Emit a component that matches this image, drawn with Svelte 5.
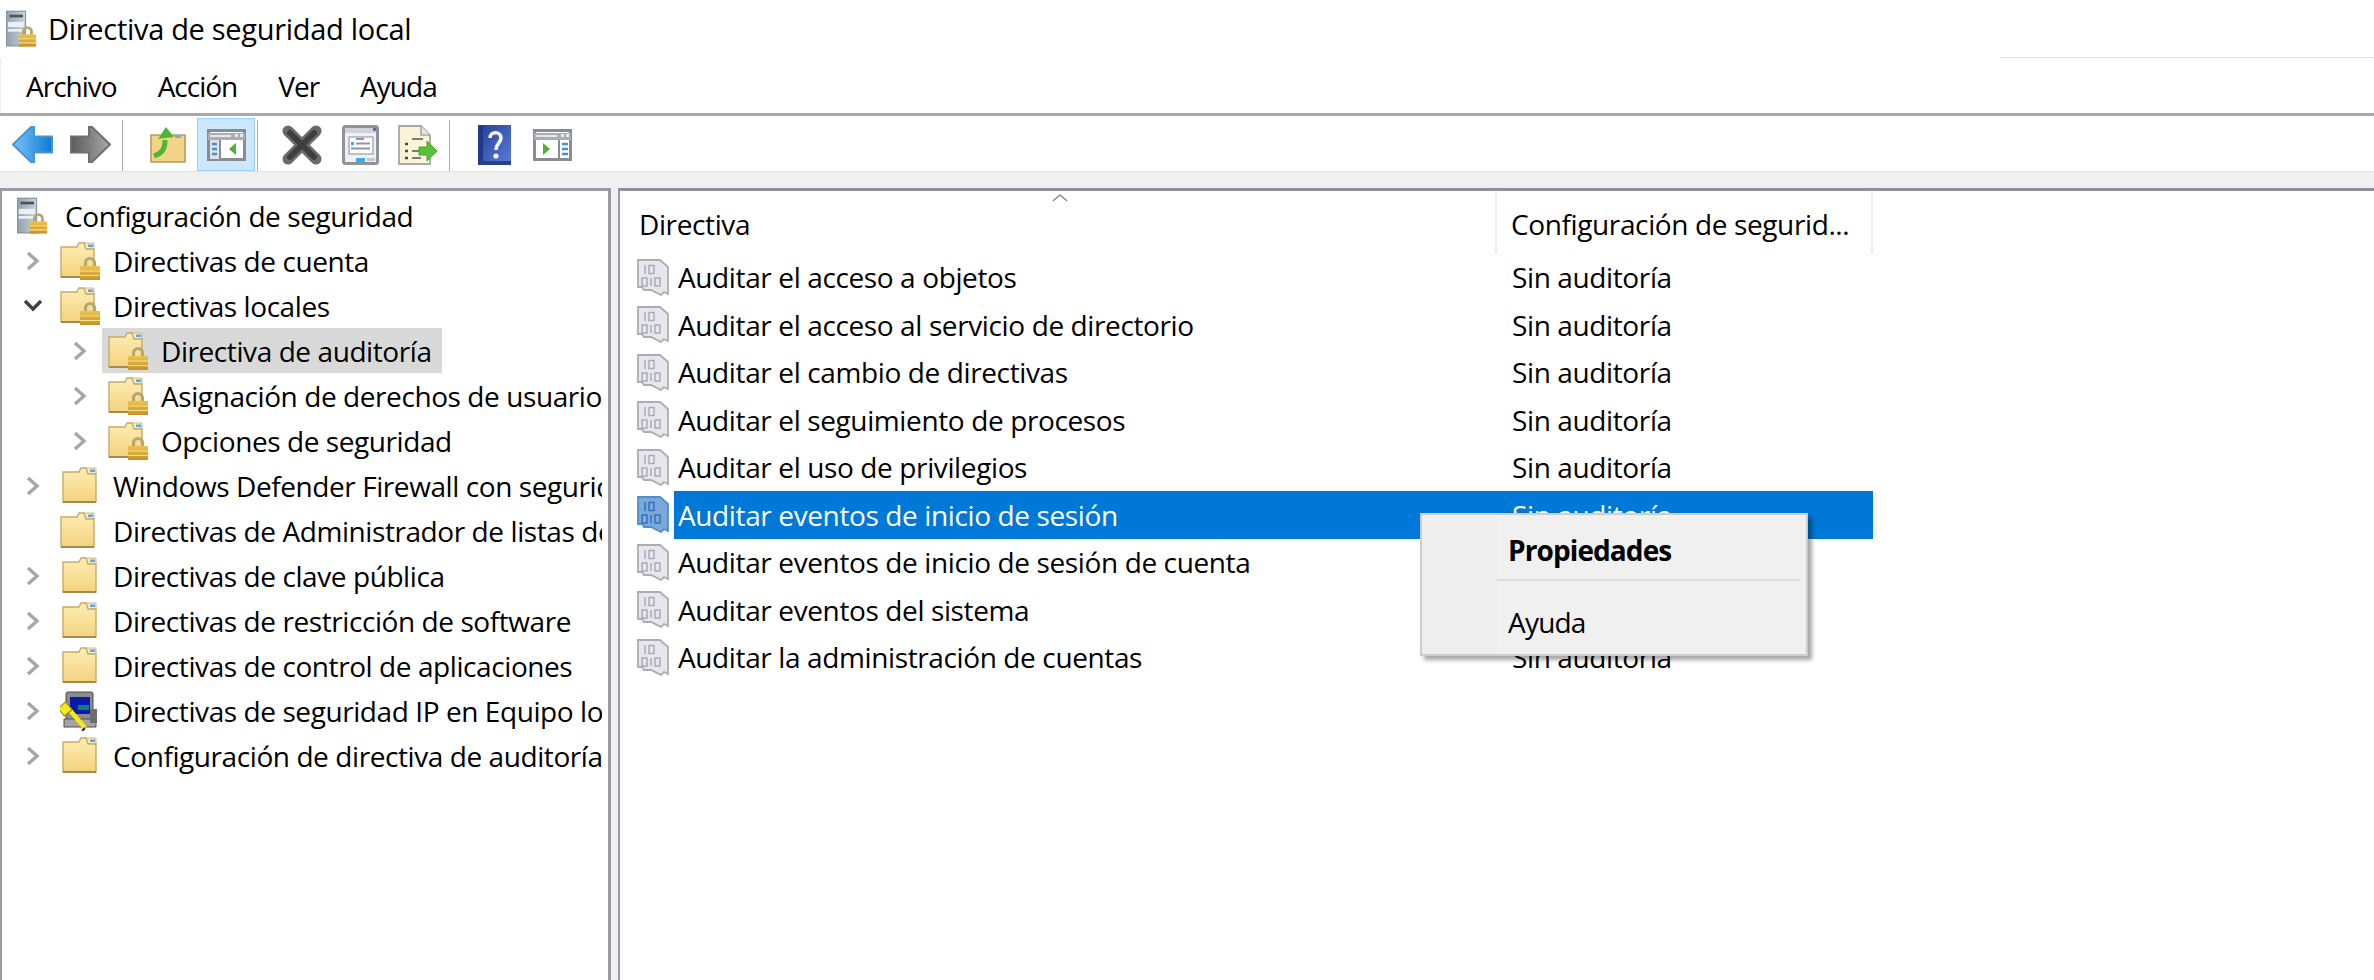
<script>
  const menus = ['Archivo', 'Acción', 'Ver', 'Ayuda'];
  const tree = [
    { label: 'Configuración de seguridad', level: 0, icon: 'i-server' },
    { label: 'Directivas de cuenta', level: 1, icon: 'i-flock', arrow: 'c' },
    { label: 'Directivas locales', level: 1, icon: 'i-flock', arrow: 'o' },
    { label: 'Directiva de auditoría', level: 2, icon: 'i-flock', arrow: 'c', selected: true },
    { label: 'Asignación de derechos de usuario', level: 2, icon: 'i-flock', arrow: 'c' },
    { label: 'Opciones de seguridad', level: 2, icon: 'i-flock', arrow: 'c' },
    { label: 'Windows Defender Firewall con seguridad avanzada', level: 1, icon: 'i-folder', arrow: 'c', shift: true },
    { label: 'Directivas de Administrador de listas de redes', level: 1, icon: 'i-folder' },
    { label: 'Directivas de clave pública', level: 1, icon: 'i-folder', arrow: 'c', shift: true },
    { label: 'Directivas de restricción de software', level: 1, icon: 'i-folder', arrow: 'c', shift: true },
    { label: 'Directivas de control de aplicaciones', level: 1, icon: 'i-folder', arrow: 'c', shift: true },
    { label: 'Directivas de seguridad IP en Equipo local', level: 1, icon: 'i-key', arrow: 'c' },
    { label: 'Configuración de directiva de auditoría avanzada', level: 1, icon: 'i-folder', arrow: 'c', shift: true }
  ];
  const rows = [
    'Auditar el acceso a objetos',
    'Auditar el acceso al servicio de directorio',
    'Auditar el cambio de directivas',
    'Auditar el seguimiento de procesos',
    'Auditar el uso de privilegios',
    'Auditar eventos de inicio de sesión',
    'Auditar eventos de inicio de sesión de cuenta',
    'Auditar eventos del sistema',
    'Auditar la administración de cuentas'
  ];
</script>

<svg class="defs" width="0" height="0" aria-hidden="true">
  <defs>
    <linearGradient id="g-folder" x1="0" y1="0" x2="0" y2="1"><stop offset="0" stop-color="#fdeeb4"/><stop offset="1" stop-color="#f4d27e"/></linearGradient>
    <linearGradient id="g-lock" x1="0" y1="0" x2="0" y2="1"><stop offset="0" stop-color="#eec24e"/><stop offset="1" stop-color="#c4922a"/></linearGradient>
    <linearGradient id="g-tower" x1="0" y1="0" x2="1" y2="0"><stop offset="0" stop-color="#8fa0ad"/><stop offset="1" stop-color="#c9d3da"/></linearGradient>
    <linearGradient id="g-back" x1="0" y1="0" x2="1" y2="0"><stop offset="0" stop-color="#7cc4f5"/><stop offset="1" stop-color="#0a7ad6"/></linearGradient>
    <linearGradient id="g-fwd" x1="0" y1="0" x2="1" y2="0"><stop offset="0" stop-color="#5c5c5c"/><stop offset="1" stop-color="#a8a8a8"/></linearGradient>
    <linearGradient id="g-help" x1="0" y1="0" x2="1" y2="1"><stop offset="0" stop-color="#24408f"/><stop offset="1" stop-color="#5a7cdc"/></linearGradient>

    <symbol id="lock" viewBox="0 0 20 24">
      <path d="M5.5 11V7a4.5 4.5 0 0 1 9 0V11" fill="none" stroke="#b5a672" stroke-width="3.2"/>
      <rect x="0" y="10" width="20" height="14" fill="url(#g-lock)"/>
      <path d="M0 15h20M0 19.5h20" stroke="#f8e08a" stroke-width="1.2"/>
    </symbol>

    <symbol id="i-server" viewBox="0 0 47 40">
      <rect x="0" y="0" width="22" height="39" fill="url(#g-tower)" stroke="#77858f"/>
      <rect x="4" y="4" width="15" height="3" fill="#4a545c"/>
      <rect x="2" y="12" width="18" height="6" fill="#eaf0f3"/>
      <rect x="2" y="20" width="18" height="3" fill="#eaf0f3"/>
      <use href="#lock" x="14" y="16" width="20" height="24"/>
    </symbol>

    <symbol id="i-folder" viewBox="0 0 47 40">
      <path d="M23 2h11v6H23z" fill="#f8ecc4" stroke="#d2bc80"/>
      <rect x="28" y="3.5" width="5" height="2.5" fill="#5aa8e8"/>
      <path d="M1 6h16l2-4h5l2 6h8v28H1z" fill="url(#g-folder)" stroke="#c8ab66" stroke-width="1.4"/>
      <path d="M1 36h33" stroke="#a58a4c" stroke-width="2"/>
    </symbol>

    <symbol id="i-flock" viewBox="0 0 47 40">
      <use href="#i-folder" x="0" y="0" width="47" height="40"/>
      <use href="#lock" x="20" y="15" width="20" height="24"/>
    </symbol>

    <symbol id="i-key" viewBox="0 0 47 40">
      <rect x="6" y="1" width="27" height="28" rx="2" fill="#8c8c8c" stroke="#4f4f4f"/>
      <rect x="10" y="6" width="20" height="17" fill="#0a1aa8"/>
      <rect x="18" y="14" width="11" height="5" fill="#0b7d86"/>
      <path d="M4 28h32v8H4z" fill="#a4a4a4" stroke="#4f4f4f"/>
      <rect x="30" y="18" width="7" height="14" fill="#6e6e6e"/>
      <path d="M8 17 25 37" stroke="#f4e81e" stroke-width="4.5"/>
      <rect x="0" y="13" width="10" height="10" fill="#f4e81e" stroke="#8f8716" transform="rotate(-40 5 18)"/>
      <path d="M25 37 22 40" stroke="#222" stroke-width="2"/>
    </symbol>

    <symbol id="i-doc" viewBox="0 0 33 37">
      <path d="M1 1h22l8 7v27l-4-2-3 3-10-5H7l-2-3H1z" fill="var(--doc, #e6e6ec)" stroke="var(--edge, #adadb1)" stroke-width="1.8"/>
      <g fill="none" stroke="var(--dig, #a6a6ba)" stroke-width="1.4">
        <path d="M8 6v9"/>
        <rect x="12" y="6.5" width="5" height="8"/>
        <rect x="5" y="19" width="5" height="8"/>
        <path d="M14 19v8"/>
        <rect x="18" y="19" width="5" height="8"/>
      </g>
    </symbol>

    <symbol id="t-back" viewBox="0 0 41 37">
      <path d="M1 18.5 19 1h3v9.5h18v16H22V36h-3z" fill="url(#g-back)" stroke="#4b93d3" stroke-width="2"/>
    </symbol>
    <symbol id="t-fwd" viewBox="0 0 41 37">
      <path d="M40 18.5 22 1h-3v9.5H1v16h18V36h3z" fill="url(#g-fwd)" stroke="#6f6f6f" stroke-width="2"/>
    </symbol>
    <symbol id="t-up" viewBox="0 0 36 37">
      <path d="M1 9h34v27H1z" fill="#f1d489" stroke="#b99b57" stroke-width="1.6"/>
      <rect x="25" y="9" width="6" height="3" fill="#6bb0ea"/>
      <path d="M4 30c9-3 11-8 11-16" fill="none" stroke="#4fb52e" stroke-width="5"/>
      <path d="M8 13 16 1l8 10z" fill="#4fb52e"/>
    </symbol>
    <symbol id="t-panel-l" viewBox="0 0 39 32">
      <rect x="1.5" y="1.5" width="36" height="29" fill="#fff" stroke="#888c94" stroke-width="3"/>
      <rect x="1" y="4" width="37" height="7" fill="#a9adb4"/>
      <rect x="3" y="6" width="21" height="2" fill="#e6e8ec"/>
      <rect x="28" y="5" width="3" height="3" fill="#e6e8ec"/><rect x="33" y="5" width="3" height="3" fill="#e6e8ec"/>
      <rect x="12" y="11" width="2" height="19" fill="#888c94"/>
      <rect x="3" y="11" width="9" height="19" fill="#dfe3e8"/>
      <path d="M5 15h5M5 20h5M5 25h5" stroke="#4a8ed6" stroke-width="2.6"/>
      <path d="M29 14v12l-7-6z" fill="#4cb32c"/>
    </symbol>
    <symbol id="t-panel-r" viewBox="0 0 39 32">
      <rect x="1.5" y="1.5" width="36" height="29" fill="#fff" stroke="#888c94" stroke-width="3"/>
      <rect x="1" y="4" width="37" height="7" fill="#a9adb4"/>
      <rect x="3" y="6" width="21" height="2" fill="#e6e8ec"/>
      <rect x="28" y="5" width="3" height="3" fill="#e6e8ec"/><rect x="33" y="5" width="3" height="3" fill="#e6e8ec"/>
      <rect x="25" y="11" width="2" height="19" fill="#888c94"/>
      <path d="M29 15h6M29 20h6M29 25h6" stroke="#4a8ed6" stroke-width="2.6"/>
      <path d="M10 14v12l7-6z" fill="#4cb32c"/>
    </symbol>
    <symbol id="t-del" viewBox="0 0 40 40">
      <path d="M6 6 34 34M34 6 6 34" stroke="#6a6a6a" stroke-width="11" stroke-linecap="round"/>
      <path d="M8 8 32 32M32 8 8 32" stroke="#3e3e3e" stroke-width="6" stroke-linecap="round"/>
    </symbol>
    <symbol id="t-props" viewBox="0 0 37 40">
      <rect x="1.5" y="1.5" width="34" height="37" rx="2" fill="#eef0f3" stroke="#8f9298" stroke-width="3"/>
      <rect x="3" y="3" width="31" height="5" fill="#cfd3d9"/>
      <rect x="31" y="3" width="3" height="3" fill="#4a73b8"/>
      <rect x="7" y="12" width="24" height="17" fill="#fff" stroke="#a4a8b0" stroke-width="1.4"/>
      <rect x="9" y="17" width="3" height="3" fill="#2ab0f0"/>
      <path d="M14 18.5h14M9 23.5h19M14 14h8" stroke="#8f94a0" stroke-width="2"/>
      <rect x="14" y="33" width="9" height="4" fill="#35b0ec"/>
      <rect x="25" y="33" width="8" height="3" fill="#c3c7cd"/>
    </symbol>
    <symbol id="t-export" viewBox="0 0 40 40">
      <path d="M1 1h22l9 9v29H1z" fill="#faf3d8" stroke="#a9a9a2" stroke-width="1.8"/>
      <path d="M23 1v9h9" fill="#e6e6e0" stroke="#a9a9a2" stroke-width="1.6"/>
      <path d="M7 19h3M7 26h3M7 33h3" stroke="#4a4a4a" stroke-width="2.4"/>
      <path d="M14 14h11M14 26h9M14 33h9" stroke="#7a7a86" stroke-width="2"/>
      <path d="M21 22h8v-6l10 10-10 10v-6h-8z" fill="#55c23a" stroke="#45a82c" stroke-width="1"/>
    </symbol>
    <symbol id="t-help" viewBox="0 0 33 40">
      <rect x="0" y="0" width="33" height="40" fill="url(#g-help)"/>
      <rect x="0" y="0" width="5" height="40" fill="#1f3a87"/>
      <rect x="0" y="36" width="33" height="4" fill="#24408f"/>
      <path d="M12 13c0-7 11-7 11 0 0 5-5 5-5 12" fill="none" stroke="#f2f2f8" stroke-width="3.6"/>
      <circle cx="18" cy="31" r="2.6" fill="#f2f2f8"/>
    </symbol>
  </defs>
</svg>

<div class="app">
  <header class="title">
    <svg class="ico title-ico" width="47" height="40"><use href="#i-server"/></svg>
    <span>Directiva de seguridad local</span>
  </header>
  <div class="title-rule"></div>

  <nav class="menu">
    {#each menus as m}<span>{m}</span>{/each}
  </nav>

  <div class="toolbar">
    <button class="tb"><svg class="ico" width="41" height="37"><use href="#t-back"/></svg></button>
    <button class="tb"><svg class="ico" width="41" height="37"><use href="#t-fwd"/></svg></button>
    <i class="sep first"></i>
    <button class="tb"><svg class="ico" width="36" height="37"><use href="#t-up"/></svg></button>
    <button class="tb on"><svg class="ico" width="39" height="32"><use href="#t-panel-l"/></svg></button>
    <i class="sep"></i>
    <button class="tb"><svg class="ico" width="40" height="40"><use href="#t-del"/></svg></button>
    <button class="tb"><svg class="ico" width="37" height="40"><use href="#t-props"/></svg></button>
    <button class="tb"><svg class="ico" width="40" height="40"><use href="#t-export"/></svg></button>
    <i class="sep"></i>
    <button class="tb"><svg class="ico" width="33" height="40"><use href="#t-help"/></svg></button>
    <button class="tb"><svg class="ico" width="39" height="32"><use href="#t-panel-r"/></svg></button>
  </div>

  <div class="panes">
    <aside class="tree">
      {#each tree as n}
        <div class="node l{n.level}">
          {#if n.level > 0}
            <span class="arrow">
              {#if n.arrow === 'c'}
                <svg width="14" height="20" viewBox="0 0 14 20"><path d="M2 2l9 8-9 8" fill="none" stroke="#a6a6a6" stroke-width="3.4"/></svg>
              {:else if n.arrow === 'o'}
                <svg width="20" height="14" viewBox="0 0 20 14"><path d="M2 2l8 8 8-8" fill="none" stroke="#404040" stroke-width="3.4"/></svg>
              {/if}
            </span>
          {/if}
          <span class="item" class:sel={n.selected}>
            <svg class="ico node-ico" class:shift={n.shift} width="47" height="40"><use href="#{n.icon}"/></svg>
            <span class="lbl">{n.label}</span>
          </span>
        </div>
      {/each}
    </aside>

    <main class="list">
      <div class="head">
        <div class="h1">Directiva<svg class="caret" width="16" height="8" viewBox="0 0 16 8"><path d="M1 7l7-6 7 6" fill="none" stroke="#8a8a8a" stroke-width="1.4"/></svg></div>
        <div class="h2">Configuración de segurid...</div>
      </div>
      {#each rows as r, i}
        <div class="row" class:active={i === 5}>
          <svg class="ico doc" width="33" height="37"><use href="#i-doc"/></svg>
          <div class="cells">
            <span class="c1">{r}</span>
            <span class="c2">Sin auditoría</span>
          </div>
        </div>
      {/each}
    </main>
  </div>

  <div class="ctx">
    <div class="ctx-item strong">Propiedades</div>
    <div class="ctx-sep"></div>
    <div class="ctx-item second">Ayuda</div>
  </div>
</div>

<style>
  :global(body) { margin: 0; background: #fff; }
  .defs { position: absolute; }
  .app {
    position: relative;
    width: 2374px;
    height: 980px;
    overflow: hidden;
    display: flex;
    flex-direction: column;
    font-family: "Open Sans", "Noto Sans", sans-serif;
    font-size: 28px;
    letter-spacing: -0.38px;
    color: #000;
    background: #fff;
  }
  .ico { display: block; flex: none; filter: blur(0.5px); }

  .title { height: 57px; display: flex; align-items: center; padding-left: 6px; box-sizing: border-box; font-size: 29px; letter-spacing: -0.3px; }
  .title-ico { width: 42px; }
  .title-rule { height: 1px; margin-left: 2000px; background: #e2e2e2; }

  .menu { height: 55px; display: flex; align-items: center; gap: 41px; padding-left: 25px; box-sizing: border-box; border-left: 1px solid #ececec; letter-spacing: -1px; }

  .toolbar {
    height: 59px;
    box-sizing: border-box;
    border-top: 3px solid #a9a9ad;
    border-bottom: 1px solid #e3e3e3;
    display: flex;
    align-items: stretch;
    padding: 2px 0 0 3px;
  }
  .tb { width: 58px; padding: 0; background: none; border: 1px solid transparent; display: flex; align-items: center; justify-content: center; box-sizing: border-box; }
  .tb.on { background: #cce8ff; border-color: #99d1ff; }
  .sep { width: 1px; background: #a8a8a8; margin: 2px 15px 0 2px; }
  .sep.first { margin-left: 3px; margin-right: 16px; }

  .panes { flex: 1; min-height: 0; padding-top: 16px; background: #f0f0f0; display: flex; gap: 7px; }

  .tree {
    width: 611px;
    box-sizing: border-box;
    background: #fff;
    border: 2px solid #9a9aa4;
    border-width: 3px 3px 0 2px;
    padding: 2px 6px 0 0;
    overflow: hidden;
    letter-spacing: -0.42px;
  }
  .node { height: 45px; display: flex; align-items: center; white-space: nowrap; overflow: hidden; }
  .l0 { padding-left: 9px; }
  .l1 { padding-left: 0; }
  .l2 { padding-left: 52px; }
  .arrow { width: 52px; flex: none; display: flex; align-items: center; justify-content: center; padding-left: 10px; box-sizing: border-box; }
  .l2 .arrow { width: 48px; padding-left: 4px; }
  .item { display: flex; align-items: center; height: 45px; padding: 0 10px 0 6px; }
  .item.sel { background: #d9d9d9; }
  .node-ico { margin-right: 6px; }
  .node-ico.shift { transform: translateX(2px); }
  .l0 .node-ico { width: 42px; }
  .lbl { white-space: nowrap; padding-top: 1px; }

  .list { flex: 1; min-width: 0; background: #fff; border-top: 3px solid #8d8f9f; border-left: 2px solid #9a9aa4; }
  .head { height: 62.5px; width: 1253px; display: flex; box-sizing: border-box; }
  .h1 { position: relative; width: 877px; box-sizing: border-box; padding: 11px 0 0 19px; border-right: 2px solid #ececec; line-height: 44px; }
  .caret { position: absolute; left: 432px; top: 3px; }
  .h2 { width: 376px; box-sizing: border-box; padding: 11px 0 0 14px; border-right: 2px solid #ececec; line-height: 44px; white-space: nowrap; overflow: hidden; }
  .row { height: 47.5px; width: 1253px; display: flex; align-items: center; padding-left: 17px; box-sizing: border-box; }
  .cells { flex: 1; height: 100%; display: flex; align-items: center; margin-left: 4px; }
  .c1 { width: 823px; box-sizing: border-box; padding-left: 4px; white-space: nowrap; }
  .c2 { padding-left: 15px; white-space: nowrap; }
  .row.active .cells { background: #0078d7; color: #fff; }
  .row.active .doc { --doc: #7aa9d8; --edge: #4f8fd0; --dig: #2e6fb5; }

  .ctx {
    position: absolute;
    left: 1420px;
    top: 513px;
    width: 388px;
    height: 143px;
    box-sizing: border-box;
    border: 2px solid #cdcdcd;
    background: linear-gradient(to right, #eeeeee 75px, #f0f0f0 75px);
    box-shadow: 4px 4px 4px rgba(0, 0, 0, 0.35);
    padding-top: 6px;
    color: #000;
    letter-spacing: -0.8px;
  }
  .ctx-item { height: 58px; line-height: 58px; padding-left: 86px; }
  .strong { font-weight: 700; letter-spacing: -0.9px; }
  .ctx-sep { height: 2px; margin: 0 6px 0 75px; background: #dcdcdc; }
  .second { margin-top: 12px; }
</style>
